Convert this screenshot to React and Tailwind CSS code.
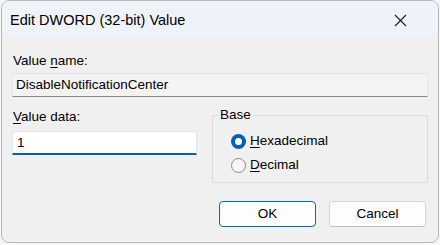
import React from "react";

function Radio({ checked, label, accel }) {
  return (
    <div className="flex items-center h-[24px]">
      {checked ? (
        <div className="w-[15px] h-[15px] rounded-full bg-[#005fb8] flex items-center justify-center">
          <div className="w-[7px] h-[7px] rounded-full bg-white" />
        </div>
      ) : (
        <div className="w-[15px] h-[15px] rounded-full border border-[#8a8a8a] bg-[#f7f7f7]" />
      )}
      <span className="ml-[4px]">
        <span className="underline underline-offset-2">{accel}</span>
        {label}
      </span>
    </div>
  );
}

export default function App() {
  return (
    <div
      className="w-[440px] h-[245px] bg-[#f6f6f6] overflow-hidden text-black"
      style={{ fontFamily: '"Liberation Sans", Arial, sans-serif' }}
    >
      <div className="ml-[1px] w-[438px] h-[243px] rounded-[8px] border border-[#b8b8b8] bg-[#f0f0f0] overflow-hidden flex flex-col">
        <div className="h-[36px] bg-[#eef3f9] flex items-center justify-between pl-[8px] pr-[31px]">
          <span className="text-[14.5px] leading-[20px] pt-[2px]">Edit DWORD (32-bit) Value</span>
          <svg width="13" height="13" viewBox="0 0 13 13" className="mt-[2px]">
            <path d="M1 1 L12 12 M12 1 L1 12" stroke="#1a1a1a" strokeWidth="1.1" />
          </svg>
        </div>
        <div className="flex flex-col pl-[10px] pr-[10px] text-[13.5px] leading-[16px]">
          <div className="mt-[16px] pl-[1px]">
            Value <span className="underline underline-offset-2">n</span>ame:
          </div>
          <div className="mt-[4px] h-[24px] bg-[#f3f3f3] border border-[#e3e3e3] border-b-[#8a8a8a] flex items-center pl-[3px]">
            DisableNotificationCenter
          </div>
          <div className="flex mt-[10px]">
            <div className="w-[185px] flex flex-col pt-[2px]">
              <div className="pl-[1px]">
                <span className="underline underline-offset-2">V</span>alue data:
              </div>
              <div className="mt-[6px] h-[24px] bg-white border border-[#e5e5e5] border-b-2 border-b-[#005fb8] flex items-center pl-[4px] rounded-t-[3px]">
                1
              </div>
            </div>
            <fieldset className="ml-[15px] flex-1 border border-[#dcdcdc] h-[76px] px-0 pt-[6px]">
              <legend className="px-[2px] ml-[5px]">Base</legend>
              <div className="pl-[18px]">
                <Radio checked accel="H" label="exadecimal" />
                <Radio accel="D" label="ecimal" />
              </div>
            </fieldset>
          </div>
          <div className="flex justify-end gap-[13px] mt-[18px] pr-[2px]">
            <button className="w-[97px] h-[26px] rounded-[4px] border border-[#0067c0] bg-[#fdfdfd] text-[13.5px]">
              OK
            </button>
            <button className="w-[97px] h-[26px] rounded-[4px] border border-[#d6d6d6] border-b-[#c0c0c0] bg-[#fdfdfd] text-[13.5px]">
              Cancel
            </button>
          </div>
        </div>
      </div>
    </div>
  );
}
